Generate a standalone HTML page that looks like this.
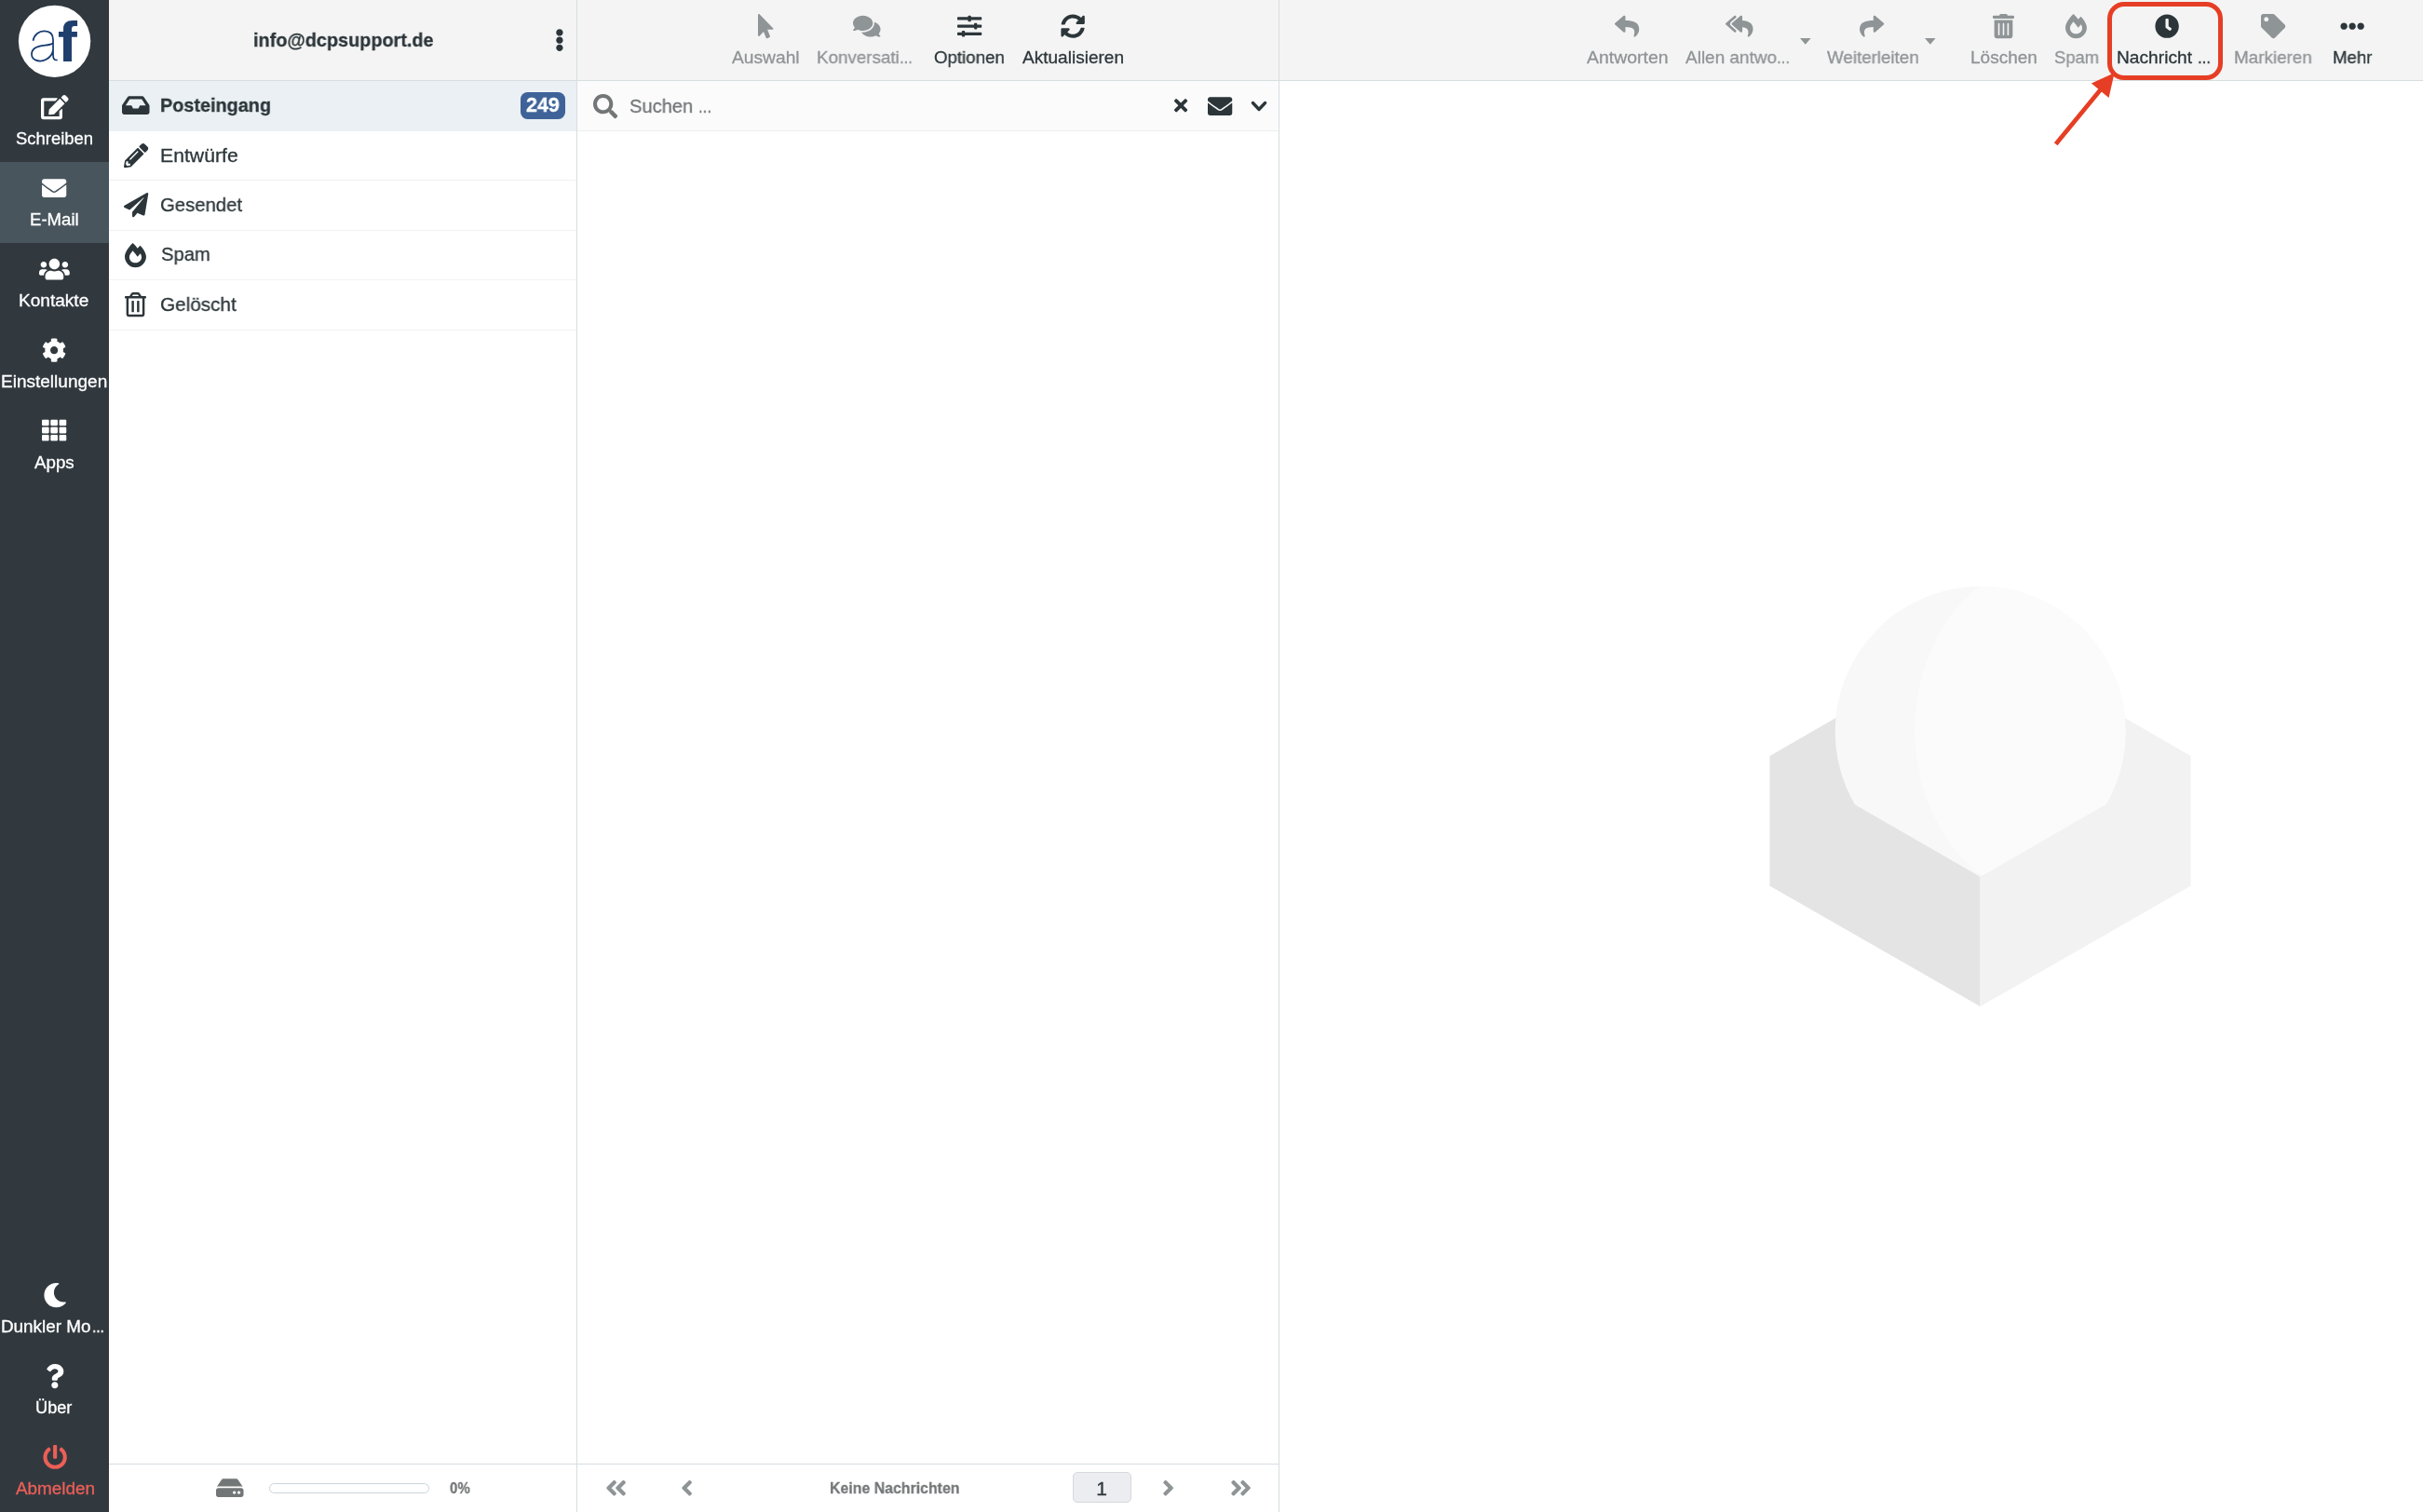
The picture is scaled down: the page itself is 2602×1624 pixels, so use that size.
<!DOCTYPE html>
<html><head><meta charset="utf-8"><title>Roundcube Webmail</title>
<style>
html,body{margin:0;padding:0;background:#fff}
body{width:2602px;height:1624px;position:relative;overflow:hidden;font-family:"Liberation Sans", sans-serif}
.i{position:absolute;display:block;overflow:visible}
.t{position:absolute;white-space:pre;line-height:1;display:block;transform-origin:0 0;will-change:transform;-webkit-text-stroke:0.3px}
</style></head><body>
<div style="position:absolute;left:0;top:0;width:117px;height:1624px;background:#31393f"></div>
<div style="position:absolute;left:0;top:174px;width:117px;height:87px;background:#48555d"></div>
<div style="position:absolute;left:117px;top:0;width:2485px;height:86px;background:#f4f4f4"></div>
<div style="position:absolute;left:117px;top:86px;width:2485px;height:1px;background:#d8dde0"></div>
<div style="position:absolute;left:619px;top:0;width:1px;height:1624px;background:#d8dde0"></div>
<div style="position:absolute;left:1373px;top:0;width:1px;height:1624px;background:#d8dde0"></div>
<div style="position:absolute;left:117px;top:87px;width:502px;height:54px;background:#ebf0f4"></div>
<div style="position:absolute;left:117px;top:193px;width:502px;height:1px;background:#f0f2f3"></div>
<div style="position:absolute;left:117px;top:247px;width:502px;height:1px;background:#f0f2f3"></div>
<div style="position:absolute;left:117px;top:300px;width:502px;height:1px;background:#f0f2f3"></div>
<div style="position:absolute;left:117px;top:354px;width:502px;height:1px;background:#f0f2f3"></div>
<div style="position:absolute;left:620px;top:87px;width:753px;height:53px;background:#fbfbfb"></div>
<div style="position:absolute;left:620px;top:140px;width:753px;height:1px;background:#ebeef0"></div>
<div style="position:absolute;left:117px;top:1572px;width:1256px;height:1px;background:#d8dde0"></div>
<svg class="i" style="left:10px;top:0;width:100px;height:90px" viewBox="0 0 1680 1512">
<circle cx="816" cy="745" r="650" fill="#fff"/>
<path fill="none" stroke="#153a70" stroke-width="29" d="M428 735 C450 620 540 562 630 562 C740 562 790 620 790 720 L790 990 C790 1060 810 1092 868 1082 M790 775 C740 835 560 800 460 870 C380 930 385 1040 470 1082 C600 1140 760 1050 787 915"/>
<path fill="#1f3f6d" d="M975 1108 L975 668 L890 668 L890 570 L975 570 L975 520 C975 420 1040 370 1140 370 L1228 370 L1228 470 L1175 470 C1140 470 1125 490 1125 525 L1125 570 L1225 570 L1225 668 L1125 668 L1125 1108 Z"/>
</svg>
<svg class="i" style="left:43.73px;top:101.88px;width:29.53px;height:26.25px;" viewBox="0 0 576 512"><path fill="#fff" d="M402.6 83.200l90.200 90.200c3.800 3.800 3.800 10 0 13.800L274.400 405.600l-92.800 10.300c-12.400 1.400-22.900-9.100-21.500-21.500l10.300-92.800L388.800 83.200c3.800-3.800 10-3.800 13.800 0zm162-22.900l-48.800-48.800c-15.200-15.200-39.900-15.200-55.200 0l-35.400 35.400c-3.800 3.800-3.800 10 0 13.800l90.200 90.200c3.800 3.800 10 3.800 13.800 0l35.400-35.400c15.200-15.300 15.200-40 0-55.200zM384 346.200V448H64V128h229.800c3.200 0 6.200-1.300 8.500-3.500l40-40c7.600-7.600 2.200-20.500-8.500-20.500H48C21.500 64 0 85.500 0 112v352c0 26.500 21.500 48 48 48h352c26.500 0 48-21.500 48-48V306.200c0-10.700-12.900-16-20.500-8.500l-40 40c-2.200 2.300-3.500 5.300-3.500 8.500z"/></svg>
<svg class="i" style="left:45.38px;top:188.88px;width:26.25px;height:26.25px;" viewBox="0 0 512 512"><path fill="#fff" d="M502.3 190.8c3.9-3.1 9.7-.2 9.7 4.7V400c0 26.5-21.5 48-48 48H48c-26.5 0-48-21.5-48-48V195.6c0-5 5.7-7.8 9.7-4.7 22.4 17.4 52.1 39.5 154.1 113.6 21.1 15.4 56.7 47.8 92.2 47.6 35.7.3 72-32.8 92.3-47.6 102-74.1 131.6-96.3 154-113.7zM256 320c23.2.4 56.6-29.2 73.4-41.4 132.7-96.3 142.8-104.7 173.4-128.7 5.8-4.5 9.2-11.5 9.2-18.900v-19c0-26.5-21.5-48-48-48H48C21.5 64 0 85.5 0 112v19c0 7.4 3.4 14.3 9.2 18.9 30.6 23.9 40.7 32.4 173.4 128.7 16.8 12.2 50.2 41.8 73.4 41.4z"/></svg>
<svg class="i" style="left:42.09px;top:275.88px;width:32.81px;height:26.25px;" viewBox="0 0 640 512"><path fill="#fff" d="M96 224c35.300 0 64-28.700 64-64s-28.700-64-64-64-64 28.700-64 64 28.700 64 64 64zm448 0c35.300 0 64-28.700 64-64s-28.700-64-64-64-64 28.700-64 64 28.700 64 64 64zm32 32h-64c-17.600 0-33.500 7.100-45.100 18.600 40.300 22.100 68.900 62 75.100 109.400h66c17.700 0 32-14.300 32-32v-32c0-35.300-28.700-64-64-64zm-256 0c61.900 0 112-50.100 112-112S381.900 32 320 32 208 82.100 208 144s50.100 112 112 112zm76.800 32h-8.300c-20.800 10-43.900 16-68.500 16s-47.600-6-68.500-16h-8.300C179.600 288 128 339.600 128 403.200V432c0 26.500 21.500 48 48 48h288c26.500 0 48-21.500 48-48v-28.800c0-63.600-51.600-115.200-115.200-115.200zm-223.700-13.400C161.500 263.100 145.600 256 128 256H64c-35.300 0-64 28.700-64 64v32c0 17.700 14.300 32 32 32h65.900c6.300-47.400 34.900-87.300 75.200-109.400z"/></svg>
<svg class="i" style="left:45.38px;top:362.88px;width:26.25px;height:26.25px;" viewBox="0 0 512 512"><path fill="#fff" d="M487.4 315.700l-42.600-24.600c4.300-23.200 4.300-47 0-70.200l42.600-24.600c4.900-2.800 7.100-8.600 5.500-14-11.100-35.600-30-67.800-54.700-94.600-3.800-4.100-10-5.100-14.800-2.300L380.800 110c-17.900-15.400-38.500-27.300-60.800-35.100V25.800c0-5.600-3.900-10.500-9.400-11.700-36.700-8.200-74.300-7.800-109.200 0-5.500 1.200-9.400 6.100-9.400 11.700V75c-22.200 7.900-42.800 19.800-60.800 35.100L88.700 85.500c-4.900-2.800-11-1.900-14.800 2.300-24.700 26.700-43.600 58.900-54.700 94.600-1.700 5.400.6 11.200 5.500 14L67.300 221c-4.300 23.200-4.300 47 0 70.200l-42.600 24.600c-4.900 2.800-7.100 8.600-5.500 14 11.100 35.600 30 67.800 54.700 94.600 3.800 4.100 10 5.100 14.800 2.300l42.600-24.600c17.900 15.400 38.500 27.300 60.800 35.100v49.200c0 5.600 3.900 10.500 9.400 11.700 36.700 8.200 74.300 7.800 109.200 0 5.500-1.200 9.400-6.100 9.400-11.700v-49.200c22.200-7.900 42.800-19.800 60.800-35.100l42.600 24.600c4.900 2.800 11 1.900 14.800-2.300 24.700-26.700 43.600-58.900 54.700-94.600 1.500-5.500-.7-11.300-5.600-14.100zM256 336c-44.100 0-80-35.900-80-80s35.900-80 80-80 80 35.900 80 80-35.900 80-80 80z"/></svg>
<svg class="i" style="left:45.38px;top:448.77px;width:26.25px;height:26.25px;" viewBox="0 0 512 512"><path fill="#fff" d="M149.333 56v80c0 13.255-10.745 24-24 24H24c-13.255 0-24-10.745-24-24V56c0-13.255 10.745-24 24-24h101.333c13.255 0 24 10.745 24 24zm181.334 240v-80c0-13.255-10.745-24-24-24H205.333c-13.255 0-24 10.745-24 24v80c0 13.255 10.745 24 24 24h101.333c13.256 0 24.001-10.745 24.001-24zm32-240v80c0 13.255 10.745 24 24 24H488c13.255 0 24-10.745 24-24V56c0-13.255-10.745-24-24-24H386.667c-13.255 0-24 10.745-24 24zm-32 80V56c0-13.255-10.745-24-24-24H205.333c-13.255 0-24 10.745-24 24v80c0 13.255 10.745 24 24 24h101.333c13.256 0 24.001-10.745 24.001-24zm-205.334 56H24c-13.255 0-24 10.745-24 24v80c0 13.255 10.745 24 24 24h101.333c13.255 0 24-10.745 24-24v-80c0-13.255-10.745-24-24-24zM0 376v80c0 13.255 10.745 24 24 24h101.333c13.255 0 24-10.745 24-24v-80c0-13.255-10.745-24-24-24H24c-13.255 0-24 10.745-24 24zm386.667-56H488c13.255 0 24-10.745 24-24v-80c0-13.255-10.745-24-24-24H386.667c-13.255 0-24 10.745-24 24v80c0 13.255 10.745 24 24 24zm0 160H488c13.255 0 24-10.745 24-24v-80c0-13.255-10.745-24-24-24H386.667c-13.255 0-24 10.745-24 24v80c0 13.255 10.745 24 24 24zM181.333 376v80c0 13.255 10.745 24 24 24h101.333c13.255 0 24-10.745 24-24v-80c0-13.255-10.745-24-24-24H205.333c-13.255 0-24 10.745-24 24z"/></svg>
<svg class="i" style="left:45.67px;top:1377.88px;width:26.25px;height:26.25px;" viewBox="0 0 512 512"><path fill="#fff" d="M283.211 512c78.962 0 151.079-35.925 198.857-94.792 7.068-8.708-.639-21.430-11.562-19.350-124.203 23.654-238.262-71.576-238.262-196.954 0-72.222 38.662-138.635 101.498-174.394 9.686-5.512 7.250-20.197-3.756-22.230A258.156 258.156 0 0 0 283.211 0c-141.309 0-256 114.511-256 256 0 141.309 114.511 256 256 256z"/></svg>
<svg class="i" style="left:48.96px;top:1464.88px;width:19.69px;height:26.25px;" viewBox="0 0 384 512"><path fill="#fff" d="M202.021 0C122.202 0 70.503 32.703 29.914 91.026c-7.363 10.580-5.093 25.086 5.178 32.874l43.138 32.709c10.373 7.865 25.132 6.026 33.253-4.148 25.049-31.381 43.630-49.449 82.757-49.449 30.764 0 68.816 19.799 68.816 49.631 0 22.552-18.617 34.134-48.993 51.164-35.423 19.860-82.299 44.576-82.299 106.405V320c0 13.255 10.745 24 24 24h72.471c13.255 0 24-10.745 24-24v-5.773c0-42.860 125.268-44.645 125.268-160.627C377.504 66.256 286.902 0 202.021 0zM192 373.459c-38.196 0-69.271 31.075-69.271 69.271 0 38.195 31.075 69.270 69.271 69.270s69.271-31.075 69.271-69.271-31.075-69.270-69.271-69.270z"/></svg>
<svg class="i" style="left:45.67px;top:1551.88px;width:26.25px;height:26.25px;" viewBox="0 0 512 512"><path fill="#ec5f57" d="M400 54.100c63 45 104 118.600 104 201.900 0 136.800-110.800 247.700-247.500 248C120 504.300 8.200 393 8 256.400 7.900 173.100 48.900 99.300 111.800 54.200c11.700-8.300 28-4.800 35 7.700L162.600 90c5.900 10.500 3.100 23.800-6.600 31-41.500 30.800-68 79.600-68 134.900-.100 92.300 74.500 168.100 168 168.100 91.600 0 168.600-74.200 168-169.100-.300-51.800-24.700-101.800-68.100-134-9.700-7.200-12.400-20.500-6.500-30.900l15.800-28.100c7-12.400 23.200-16.100 34.800-7.800zM296 264V24c0-13.300-10.700-24-24-24h-32c-13.300 0-24 10.700-24 24v240c0 13.300 10.700 24 24 24h32c13.300 0 24-10.700 24-24z"/></svg>
<svg class="i" style="left:595.58px;top:29.88px;width:9.84px;height:26.25px;" viewBox="0 0 192 512"><path fill="#2c363a" d="M96 184c39.800 0 72 32.200 72 72s-32.200 72-72 72-72-32.200-72-72 32.200-72 72-72zM24 96c0 39.800 32.200 72 72 72s72-32.200 72-72-32.200-72-72-72-72 32.200-72 72zm0 320c0 39.800 32.200 72 72 72s72-32.200 72-72-32.200-72-72-72-72 32.200-72 72z"/></svg>
<svg class="i" style="left:131.33px;top:99.97px;width:29.53px;height:26.25px;" viewBox="0 0 576 512"><path fill="#2c363a" d="M567.938 243.908L462.250 85.374A48.003 48.003 0 0 0 422.311 64H153.689a48 48 0 0 0-39.938 21.374L8.062 243.908A47.994 47.994 0 0 0 0 270.533V400c0 26.510 21.490 48 48 48h480c26.510 0 48-21.490 48-48V270.533a47.994 47.994 0 0 0-8.062-26.625zM162.252 128h251.497l85.333 128H376l-32 64H232l-32-64H76.918l85.334-128z"/></svg>
<svg class="i" style="left:132.78px;top:154.07px;width:26.25px;height:26.25px;" viewBox="0 0 512 512"><path fill="#2c363a" d="M497.900 142.100l-46.100 46.100c-4.700 4.700-12.300 4.700-17 0l-111-111c-4.700-4.700-4.700-12.300 0-17l46.100-46.100c18.700-18.700 49.100-18.700 67.900 0l60.100 60.100c18.800 18.700 18.800 49.100 0 67.900zM284.200 99.800L21.600 362.400.400 483.900c-2.900 16.400 11.400 30.600 27.800 27.800l121.500-21.300 262.600-262.600c4.700-4.700 4.700-12.300 0-17l-111-111c-4.800-4.700-12.400-4.700-17.100 0zM124.100 339.900c-5.500-5.500-5.500-14.300 0-19.800l154-154c5.500-5.500 14.300-5.500 19.800 0s5.500 14.300 0 19.800l-154 154c-5.500 5.500-14.300 5.500-19.800 0zM88 424h48v36.300l-64.500 11.300-31.100-31.100L51.700 376H88v48z"/></svg>
<svg class="i" style="left:132.78px;top:207.12px;width:26.25px;height:26.25px;" viewBox="0 0 512 512"><path fill="#2c363a" d="M476 3.200L12.500 270.600c-18.100 10.400-15.800 35.600 2.200 43.200L121 358.400l287.300-253.200c5.500-4.900 13.300 2.600 8.600 8.300L176 407v80.500c0 23.600 28.500 32.900 42.500 15.800L282 426l124.600 52.200c14.200 6 30.400-2.900 33-18.200l72-432C515 7.800 493.300-6.800 476 3.200z"/></svg>
<svg class="i" style="left:134.12px;top:260.98px;width:22.97px;height:26.25px;" viewBox="0 0 448 512"><path fill="#2c363a" d="M323.560 51.200c-20.800 19.300-39.580 39.590-56.220 59.970C240.080 73.620 206.280 35.530 168 0 69.740 91.170 0 209.960 0 281.600 0 408.850 100.290 512 224 512s224-103.150 224-230.400c0-53.270-51.980-163.140-124.440-230.400zm-19.470 340.650C282.430 407.010 255.720 416 226.860 416 154.710 416 96 368.260 96 290.750c0-38.610 24.310-72.630 72.790-130.750 6.930 7.980 98.830 125.340 98.830 125.340l58.630-66.880c4.140 6.850 7.910 13.550 11.270 19.970 27.350 52.190 15.810 118.970-33.430 153.420z"/></svg>
<svg class="i" style="left:134.12px;top:313.88px;width:22.97px;height:26.25px;" viewBox="0 0 448 512"><path fill="#2c363a" d="M268 416h24a12 12 0 0 0 12-12V188a12 12 0 0 0-12-12h-24a12 12 0 0 0-12 12v216a12 12 0 0 0 12 12zM432 80h-82.410l-34-56.700A48 48 0 0 0 274.410 0H173.590a48 48 0 0 0-41.160 23.300L98.410 80H16A16 16 0 0 0 0 96v16a16 16 0 0 0 16 16h16v336a48 48 0 0 0 48 48h288a48 48 0 0 0 48-48V128h16a16 16 0 0 0 16-16V96a16 16 0 0 0-16-16zM171.840 50.910A6 6 0 0 1 177 48h94a6 6 0 0 1 5.150 2.910L293.610 80H154.390zM368 464H80V128h288zm-212-48h24a12 12 0 0 0 12-12V188a12 12 0 0 0-12-12h-24a12 12 0 0 0-12 12v216a12 12 0 0 0 12 12z"/></svg>
<div style="position:absolute;left:559px;top:99px;width:48px;height:28.7px;border-radius:7.5px;background:#3f6399"></div>
<svg class="i" style="left:813.95px;top:14.88px;width:16.41px;height:26.25px;" viewBox="0 0 320 512"><path fill="#8f9496" d="M302.189 329.126H196.105l55.831 135.993c3.889 9.428-.555 19.999-9.444 23.999l-49.165 21.427c-9.165 4-19.443-.571-23.332-9.714l-53.053-129.136-86.664 89.138C18.729 472.710 0 463.554 0 447.977V18.299C0 1.899 19.921-6.096 30.277 5.443l284.412 292.542c11.472 11.179 3.007 31.141-12.500 31.141z"/></svg>
<svg class="i" style="left:915.68px;top:15.07px;width:29.53px;height:26.25px;" viewBox="0 0 576 512"><path fill="#8f9496" d="M416 192c0-88.400-93.100-160-208-160S0 103.600 0 192c0 34.300 14.100 65.900 38 92-13.400 30.200-35.500 54.200-35.800 54.500-2.200 2.300-2.800 5.700-1.500 8.700S4.800 352 8 352c36.600 0 66.900-12.300 88.700-25 32.200 15.700 70.300 25 111.300 25 114.900 0 208-71.600 208-160zm122 220c23.900-26 38-57.700 38-92 0-66.900-53.500-124.200-129.300-148.100.9 6.600 1.300 13.300 1.300 20.100 0 105.900-107.700 192-240 192-10.800 0-21.300-.800-31.700-1.900C207.800 439.600 281.800 480 368 480c41 0 79.100-9.200 111.300-25 21.800 12.700 52.100 25 88.700 25 3.200 0 6.100-1.900 7.300-4.800 1.300-2.900.7-6.300-1.500-8.700-.300-.300-22.400-24.200-35.800-54.500z"/></svg>
<svg class="i" style="left:1027.88px;top:15.27px;width:26.25px;height:26.25px;" viewBox="0 0 512 512"><path fill="#2c363a" d="M496 384H160v-16c0-8.800-7.200-16-16-16h-32c-8.800 0-16 7.200-16 16v16H16c-8.800 0-16 7.200-16 16v32c0 8.800 7.200 16 16 16h80v16c0 8.800 7.200 16 16 16h32c8.800 0 16-7.200 16-16v-16h336c8.800 0 16-7.200 16-16v-32c0-8.800-7.200-16-16-16zm0-160h-80v-16c0-8.800-7.200-16-16-16h-32c-8.800 0-16 7.200-16 16v16H16c-8.800 0-16 7.200-16 16v32c0 8.800 7.200 16 16 16h336v16c0 8.800 7.200 16 16 16h32c8.800 0 16-7.200 16-16v-16h80c8.800 0 16-7.200 16-16v-32c0-8.800-7.200-16-16-16zm0-160H288V48c0-8.800-7.200-16-16-16h-32c-8.800 0-16 7.200-16 16v16H16C7.200 64 0 71.200 0 80v32c0 8.800 7.200 16 16 16h208v16c0 8.800 7.200 16 16 16h32c8.800 0 16-7.200 16-16v-16h208c8.800 0 16-7.200 16-16V80c0-8.800-7.200-16-16-16z"/></svg>
<svg class="i" style="left:1139.08px;top:14.98px;width:26.25px;height:26.25px;" viewBox="0 0 512 512"><path fill="#2c363a" d="M370.72 133.28C339.458 104.008 298.888 87.962 255.848 88c-77.458.068-144.328 53.178-162.791 126.850-1.344 5.363-6.122 9.150-11.651 9.150H24.103c-7.498 0-13.194-6.807-11.807-14.176C33.933 94.924 134.813 8 256 8c66.448 0 126.791 26.136 171.315 68.685L463.030 40.970C478.149 25.851 504 36.559 504 57.941V192c0 13.255-10.745 24-24 24H345.941c-21.382 0-32.090-25.851-16.971-40.971l41.750-41.749zM32 296h134.059c21.382 0 32.090 25.851 16.971 40.971l-41.750 41.750c31.262 29.273 71.835 45.319 114.876 45.280 77.418-.070 144.315-53.144 162.787-126.849 1.344-5.363 6.122-9.150 11.651-9.150h57.304c7.498 0 13.194 6.807 11.807 14.176C478.067 417.076 377.187 504 256 504c-66.448 0-126.791-26.136-171.315-68.685L48.970 471.030C33.851 486.149 8 475.441 8 454.059V320c0-13.255 10.745-24 24-24z"/></svg>
<svg class="i" style="left:636.88px;top:100.88px;width:26.25px;height:26.25px;" viewBox="0 0 512 512"><path fill="#737677" d="M505 442.7L405.3 343c-4.500-4.500-10.600-7-17-7H372c27.600-35.300 44-79.700 44-128C416 93.100 322.900 0 208 0S0 93.100 0 208s93.100 208 208 208c48.300 0 92.700-16.400 128-44v16.300c0 6.400 2.500 12.500 7 17l99.700 99.700c9.400 9.400 24.600 9.400 33.900 0l28.300-28.300c9.400-9.400 9.400-24.600.100-34zM208 336c-70.700 0-128-57.200-128-128 0-70.700 57.200-128 128-128 70.700 0 128 57.200 128 128 0 70.700-57.200 128-128 128z"/></svg>
<svg class="i" style="left:1260.87px;top:102.80px;width:14.16px;height:20.60px;" viewBox="0 0 352 512"><path fill="#2c363a" d="M242.72 256l100.07-100.07c12.28-12.28 12.28-32.19 0-44.48l-22.24-22.24c-12.28-12.28-32.19-12.28-44.48 0L176 189.28 75.93 89.21c-12.28-12.28-32.19-12.28-44.48 0L9.21 111.45c-12.28 12.28-12.28 32.19 0 44.48L109.28 256 9.21 356.07c-12.28 12.28-12.28 32.19 0 44.48l22.24 22.24c12.28 12.28 32.2 12.28 44.48 0L176 322.72l100.07 100.07c12.28 12.28 32.2 12.28 44.48 0l22.24-22.24c12.28-12.28 12.28-32.19 0-44.48L242.72 256z"/></svg>
<svg class="i" style="left:1296.92px;top:100.97px;width:26.25px;height:26.25px;" viewBox="0 0 512 512"><path fill="#2c363a" d="M502.3 190.8c3.9-3.1 9.7-.2 9.7 4.7V400c0 26.5-21.5 48-48 48H48c-26.5 0-48-21.5-48-48V195.6c0-5 5.7-7.8 9.7-4.7 22.4 17.4 52.1 39.5 154.1 113.6 21.1 15.4 56.7 47.8 92.2 47.6 35.7.3 72-32.8 92.3-47.6 102-74.1 131.6-96.3 154-113.7zM256 320c23.2.4 56.6-29.2 73.4-41.4 132.7-96.3 142.8-104.7 173.4-128.7 5.8-4.5 9.2-11.5 9.2-18.900v-19c0-26.5-21.5-48-48-48H48C21.5 64 0 85.5 0 112v19c0 7.4 3.4 14.3 9.2 18.9 30.6 23.9 40.7 32.4 173.4 128.7 16.8 12.2 50.2 41.8 73.4 41.4z"/></svg>
<svg class="i" style="left:1340px;top:104px;width:24px;height:20px" viewBox="1340 104 24 20"><path fill="none" stroke="#2c363a" stroke-width="3.3" stroke-linecap="round" stroke-linejoin="round" d="M1345.4 110.5 L1352 117.5 L1358.6 110.5"/></svg>
<svg class="i" style="left:1734.03px;top:15.02px;width:26.25px;height:26.25px;" viewBox="0 0 512 512"><path fill="#8f9496" d="M8.309 189.836L184.313 37.851C199.719 24.546 224 35.347 224 56.015v80.053c160.629 1.839 288 34.032 288 186.258 0 61.441-39.581 122.309-83.333 154.132-13.653 9.931-33.111-2.533-28.077-18.631 45.344-145.012-21.507-183.510-176.590-185.742V360c0 20.700-24.300 31.453-39.687 18.164l-176.004-152c-11.071-9.562-11.086-26.753 0-36.328z"/></svg>
<svg class="i" style="left:1853.38px;top:15.02px;width:29.53px;height:26.25px;" viewBox="0 0 576 512"><path fill="#8f9496" d="M136.309 189.836L312.313 37.851C327.720 24.546 352 35.348 352 56.015v82.763c129.182 10.231 224 52.212 224 183.548 0 61.441-39.582 122.309-83.333 154.132-13.653 9.931-33.111-2.533-28.077-18.631 38.512-123.162-3.922-169.482-112.590-182.015v84.175c0 20.701-24.300 31.453-39.687 18.164L136.309 226.164c-11.071-9.561-11.086-26.753 0-36.328zm-128 36.328L184.313 378.150C199.719 391.453 224 380.700 224 360v-15.818l-108.606-93.785A55.960 55.960 0 0 1 96 207.998a55.953 55.953 0 0 1 19.393-42.380L224 71.832V56.015c0-20.667-24.281-31.469-39.687-18.164L8.309 189.836c-11.086 9.575-11.071 26.767 0 36.328z"/></svg>
<svg class="i" style="left:1997.22px;top:14.88px;width:26.25px;height:26.25px;" viewBox="0 0 512 512"><path fill="#8f9496" d="M503.691 189.836L327.687 37.851C312.281 24.546 288 35.347 288 56.015v80.053C127.371 137.907 0 170.100 0 322.326c0 61.441 39.581 122.309 83.333 154.132 13.653 9.931 33.111-2.533 28.077-18.631C66.066 312.814 132.917 274.316 288 272.085V360c0 20.700 24.300 31.453 39.687 18.164l176.004-152c11.071-9.562 11.086-26.753 0-36.328z"/></svg>
<svg class="i" style="left:2139.87px;top:14.98px;width:22.97px;height:26.25px;" viewBox="0 0 448 512"><path fill="#8f9496" d="M32 464a48 48 0 0 0 48 48h288a48 48 0 0 0 48-48V128H32zm272-256a16 16 0 0 1 32 0v224a16 16 0 0 1-32 0zm-96 0a16 16 0 0 1 32 0v224a16 16 0 0 1-32 0zm-96 0a16 16 0 0 1 32 0v224a16 16 0 0 1-32 0zM432 32H312l-9.400-18.700A24 24 0 0 0 281.100 0H166.800a23.720 23.720 0 0 0-21.400 13.300L136 32H16A16 16 0 0 0 0 48v32a16 16 0 0 0 16 16h416a16 16 0 0 0 16-16V48a16 16 0 0 0-16-16z"/></svg>
<svg class="i" style="left:2218.37px;top:14.77px;width:22.97px;height:26.25px;" viewBox="0 0 448 512"><path fill="#8f9496" d="M323.560 51.200c-20.800 19.300-39.580 39.590-56.220 59.970C240.080 73.620 206.280 35.530 168 0 69.740 91.170 0 209.960 0 281.600 0 408.850 100.290 512 224 512s224-103.150 224-230.400c0-53.270-51.980-163.140-124.440-230.400zm-19.470 340.650C282.430 407.010 255.720 416 226.860 416 154.710 416 96 368.260 96 290.750c0-38.610 24.310-72.630 72.790-130.750 6.930 7.980 98.830 125.340 98.830 125.340l58.630-66.880c4.140 6.850 7.910 13.550 11.270 19.970 27.350 52.190 15.810 118.970-33.430 153.420z"/></svg>
<svg class="i" style="left:2313.72px;top:14.77px;width:26.25px;height:26.25px;" viewBox="0 0 512 512"><path fill="#2c363a" d="M256,8C119,8,8,119,8,256S119,504,256,504,504,393,504,256,393,8,256,8Zm92.49,313h0l-20,25a16,16,0,0,1-22.49,2.5h0l-67-49.720a40,40,0,0,1-15-31.230V112a16,16,0,0,1,16-16h32a16,16,0,0,1,16,16V256l58,42.500A16,16,0,0,1,348.490,321Z"/></svg>
<svg class="i" style="left:2428.07px;top:14.88px;width:26.25px;height:26.25px;" viewBox="0 0 512 512"><path fill="#8f9496" d="M0 252.118V48C0 21.490 21.490 0 48 0h204.118a48 48 0 0 1 33.941 14.059l211.882 211.882c18.745 18.745 18.745 49.137 0 67.882L293.823 497.941c-18.745 18.745-49.137 18.745-67.882 0L14.059 286.059A48 48 0 0 1 0 252.118zM112 64c-26.510 0-48 21.490-48 48s21.490 48 48 48 48-21.490 48-48-21.490-48-48-48z"/></svg>
<svg class="i" style="left:2513.12px;top:14.88px;width:26.25px;height:26.25px;" viewBox="0 0 512 512"><path fill="#2c363a" d="M328 256c0 39.800-32.200 72-72 72s-72-32.200-72-72 32.200-72 72-72 72 32.200 72 72zm104-72c-39.800 0-72 32.200-72 72s32.200 72 72 72 72-32.200 72-72-32.200-72-72-72zm-352 0c-39.800 0-72 32.200-72 72s32.200 72 72 72 72-32.200 72-72-32.200-72-72-72z"/></svg>
<svg class="i" style="left:1932.85px;top:41.1px;width:11.6px;height:6.7px" viewBox="0 0 116 67"><path fill="#8f9496" d="M0 0H116L58 67Z"/></svg>
<svg class="i" style="left:2066.95px;top:41.1px;width:11.6px;height:6.7px" viewBox="0 0 116 67"><path fill="#8f9496" d="M0 0H116L58 67Z"/></svg>
<div style="position:absolute;left:2263px;top:2px;width:114px;height:74px;border:5px solid #e63e24;border-radius:18px"></div>
<svg class="i" style="left:2180px;top:60px;width:120px;height:110px" viewBox="2180 60 120 110">
<line x1="2207.7" y1="154.8" x2="2256" y2="95.9" stroke="#e63e24" stroke-width="4.7"/>
<path fill="#e63e24" d="M2270.6 78.2 L2245.9 89.5 L2264.6 105 Z"/></svg>
<svg class="i" style="left:232.23px;top:1584.88px;width:29.53px;height:26.25px;" viewBox="0 0 576 512"><path fill="#737677" d="M576 304v96c0 26.510-21.490 48-48 48H48c-26.510 0-48-21.490-48-48v-96c0-26.510 21.490-48 48-48h480c26.510 0 48 21.490 48 48zm-48-80a79.557 79.557 0 0 1 30.777 6.165L462.250 85.374A48.003 48.003 0 0 0 422.311 64H153.689a48 48 0 0 0-39.938 21.374L17.223 230.165A79.557 79.557 0 0 1 48 224h480zm-48 96c-17.673 0-32 14.327-32 32s14.327 32 32 32 32-14.327 32-32-14.327-32-32-32zm-96 0c-17.673 0-32 14.327-32 32s14.327 32 32 32 32-14.327 32-32-14.327-32-32-32z"/></svg>
<div style="position:absolute;left:289px;top:1592.5px;width:172px;height:11.5px;box-sizing:border-box;border:1px solid #ccd4d8;border-radius:6px;background:#fff"></div>
<svg class="i" style="left:649.51px;top:1584.85px;width:23.19px;height:26.50px;" viewBox="0 0 448 512"><path fill="#8f9496" d="M223.700 239l136-136c9.400-9.400 24.600-9.400 33.900 0l22.600 22.600c9.400 9.400 9.400 24.600 0 33.900L319.900 256l96.400 96.400c9.400 9.400 9.400 24.600 0 33.900L393.700 409c-9.400 9.400-24.600 9.400-33.900 0l-136-136c-9.500-9.400-9.500-24.600-.100-34zm-192 34l136 136c9.400 9.400 24.600 9.400 33.900 0l22.600-22.600c9.400-9.400 9.400-24.600 0-33.900L127.900 256l96.400-96.400c9.400-9.400 9.400-24.600 0-33.900L201.700 103c-9.400-9.400-24.600-9.400-33.900 0l-136 136c-9.500 9.400-9.500 24.600-.100 34z"/></svg>
<svg class="i" style="left:730.77px;top:1584.85px;width:13.25px;height:26.50px;" viewBox="0 0 256 512"><path fill="#8f9496" d="M31.700 239l136-136c9.400-9.400 24.600-9.400 33.900 0l22.600 22.600c9.400 9.400 9.400 24.600 0 33.900L127.900 256l96.400 96.400c9.400 9.400 9.400 24.600 0 33.900L201.700 409c-9.400 9.400-24.600 9.400-33.900 0l-136-136c-9.500-9.400-9.500-24.600-.100-34z"/></svg>
<svg class="i" style="left:1248.38px;top:1584.85px;width:13.25px;height:26.50px;" viewBox="0 0 256 512"><path fill="#8f9496" d="M224.300 273l-136 136c-9.400 9.400-24.600 9.400-33.900 0l-22.600-22.600c-9.400-9.400-9.400-24.600 0-33.900l96.400-96.400-96.400-96.400c-9.400-9.400-9.400-24.600 0-33.900L54.300 103c9.400-9.400 24.600-9.400 33.900 0l136 136c9.500 9.400 9.500 24.600.100 34z"/></svg>
<svg class="i" style="left:1320.51px;top:1584.85px;width:23.19px;height:26.50px;" viewBox="0 0 448 512"><path fill="#8f9496" d="M224.300 273l-136 136c-9.400 9.400-24.600 9.400-33.900 0l-22.600-22.600c-9.400-9.400-9.400-24.600 0-33.900l96.400-96.400-96.400-96.400c-9.400-9.400-9.400-24.600 0-33.900L54.300 103c9.400-9.400 24.600-9.400 33.900 0l136 136c9.500 9.400 9.500 24.600.100 34zm192-34l-136-136c-9.400-9.400-24.600-9.400-33.900 0l-22.600 22.600c-9.400 9.400-9.400 24.600 0 33.900l96.400 96.400-96.400 96.400c-9.400 9.400-9.400 24.600 0 33.900l22.600 22.600c9.400 9.400 24.600 9.400 33.900 0l136-136c9.400-9.200 9.400-24.400 0-33.800z"/></svg>
<div style="position:absolute;left:1152.4px;top:1581.2px;width:62.4px;height:33.2px;box-sizing:border-box;border:1px solid #d5d9dc;border-radius:5px;background:#ebedf0"></div>
<svg class="i" style="left:1880px;top:600px;width:500px;height:500px" viewBox="1880 600 500 500">
<path fill="#e4e4e4" d="M1900.5 812 L2126.5 681.5 L2126.5 1081 L1900.5 951.4 Z"/>
<path fill="#f2f2f2" d="M2352.6 812 L2126.5 681.5 L2126.5 1081 L2352.6 951.4 Z"/>
<clipPath id="cv"><path d="M1880 600 H2380 V795.5 L2126.5 941.8 L1880 799.5 Z"/></clipPath>
<g clip-path="url(#cv)"><circle cx="2126.7" cy="785.8" r="156" fill="#f8f8f8"/>
<clipPath id="cc"><circle cx="2126.7" cy="785.8" r="156"/></clipPath>
<ellipse cx="2200" cy="784" rx="143.7" ry="180" fill="#fbfbfb" clip-path="url(#cc)"/></g>
</svg>
<span class="t" style="top:139.76px;font-size:18px;font-weight:400;color:#fff;left:17.20px;transform:scaleX(1.0245)">Schreiben</span>
<span class="t" style="top:226.76px;font-size:18px;font-weight:400;color:#fff;left:31.97px;transform:scaleX(1.0326)">E-Mail</span>
<span class="t" style="top:313.76px;font-size:18px;font-weight:400;color:#fff;left:20.34px;transform:scaleX(1.0594)">Kontakte</span>
<span class="t" style="top:400.76px;font-size:18px;font-weight:400;color:#fff;left:1.34px;transform:scaleX(1.0569)">Einstellungen</span>
<span class="t" style="top:487.76px;font-size:18px;font-weight:400;color:#fff;left:37.10px;transform:scaleX(1.0408)">Apps</span>
<span class="t" style="top:1415.76px;font-size:18px;font-weight:400;color:#fff;left:1.25px;transform:scaleX(1.0481)">Dunkler Mo</span>
<span class="t" style="top:1415.76px;font-size:18px;font-weight:400;color:#fff;left:98.74px;transform:scaleX(0.8614)">...</span>
<span class="t" style="top:1502.76px;font-size:18px;font-weight:400;color:#fff;left:37.99px;transform:scaleX(1.0100)">Über</span>
<span class="t" style="top:1589.76px;font-size:18px;font-weight:400;color:#ec5f57;left:16.50px;transform:scaleX(1.0494)">Abmelden</span>
<span class="t" style="top:32.22px;font-size:21px;font-weight:700;color:#2c363a;left:271.55px;transform:scaleX(0.9453)">info@dcpsupport.de</span>
<span class="t" style="top:102.22px;font-size:21px;font-weight:700;color:#2c363a;left:171.76px;transform:scaleX(0.9446)">Posteingang</span>
<span class="t" style="top:155.62px;font-size:21px;font-weight:400;color:#2c363a;left:171.69px;transform:scaleX(1.0099)">Entwürfe</span>
<span class="t" style="top:209.02px;font-size:21px;font-weight:400;color:#2c363a;left:171.73px;transform:scaleX(0.9675)">Gesendet</span>
<span class="t" style="top:262.42px;font-size:21px;font-weight:400;color:#2c363a;left:172.70px;transform:scaleX(0.9639)">Spam</span>
<span class="t" style="top:315.82px;font-size:21px;font-weight:400;color:#2c363a;left:171.71px;transform:scaleX(0.9874)">Gelöscht</span>
<span class="t" style="top:102.12px;font-size:22.3px;font-weight:700;color:#fff;left:565.10px;transform:scaleX(0.9619)">249</span>
<span class="t" style="top:51.92px;font-size:19px;font-weight:400;color:#8f9496;left:786.20px;transform:scaleX(1.0114)">Auswahl</span>
<span class="t" style="top:51.92px;font-size:19px;font-weight:400;color:#8f9496;left:876.91px;transform:scaleX(0.9892)">Konversati</span>
<span class="t" style="top:51.92px;font-size:19px;font-weight:400;color:#8f9496;left:966.12px;transform:scaleX(0.8777)">...</span>
<span class="t" style="top:51.92px;font-size:19px;font-weight:400;color:#2c363a;left:1003.40px;transform:scaleX(0.9837)">Optionen</span>
<span class="t" style="top:51.92px;font-size:19px;font-weight:400;color:#2c363a;left:1097.80px;transform:scaleX(1.0018)">Aktualisieren</span>
<span class="t" style="top:103.12px;font-size:21px;font-weight:400;color:#707577;left:675.70px;transform:scaleX(0.9583)">Suchen</span>
<span class="t" style="top:103.12px;font-size:21px;font-weight:400;color:#707577;left:749.89px;transform:scaleX(0.8112)">...</span>
<span class="t" style="top:51.92px;font-size:19px;font-weight:400;color:#8f9496;left:1703.60px;transform:scaleX(1.0238)">Antworten</span>
<span class="t" style="top:51.92px;font-size:19px;font-weight:400;color:#8f9496;left:1810.10px;transform:scaleX(0.9973)">Allen antwo</span>
<span class="t" style="top:51.92px;font-size:19px;font-weight:400;color:#8f9496;left:1908.41px;transform:scaleX(0.8925)">...</span>
<span class="t" style="top:51.92px;font-size:19px;font-weight:400;color:#8f9496;left:1961.50px;transform:scaleX(0.9869)">Weiterleiten</span>
<span class="t" style="top:51.92px;font-size:19px;font-weight:400;color:#8f9496;left:2115.51px;transform:scaleX(0.9933)">Löschen</span>
<span class="t" style="top:51.92px;font-size:19px;font-weight:400;color:#8f9496;left:2206.20px;transform:scaleX(0.9691)">Spam</span>
<span class="t" style="top:51.92px;font-size:19px;font-weight:400;color:#2c363a;left:2272.99px;transform:scaleX(1.0091)">Nachricht</span>
<span class="t" style="top:51.92px;font-size:19px;font-weight:400;color:#2c363a;left:2359.81px;transform:scaleX(0.8851)">...</span>
<span class="t" style="top:51.92px;font-size:19px;font-weight:400;color:#8f9496;left:2399.21px;transform:scaleX(0.9915)">Markieren</span>
<span class="t" style="top:51.92px;font-size:19px;font-weight:400;color:#2c363a;left:2504.72px;transform:scaleX(0.9776)">Mehr</span>
<span class="t" style="top:1589.67px;font-size:17.4px;font-weight:700;color:#737677;left:482.80px;transform:scaleX(0.8633)">0%</span>
<span class="t" style="top:1589.67px;font-size:17.4px;font-weight:700;color:#737677;left:890.69px;transform:scaleX(0.9135)">Keine Nachrichten</span>
<span class="t" style="top:1587.52px;font-size:21px;font-weight:400;color:#2c363a;left:1132.6px;width:100px;text-align:center">1</span>
</body></html>
